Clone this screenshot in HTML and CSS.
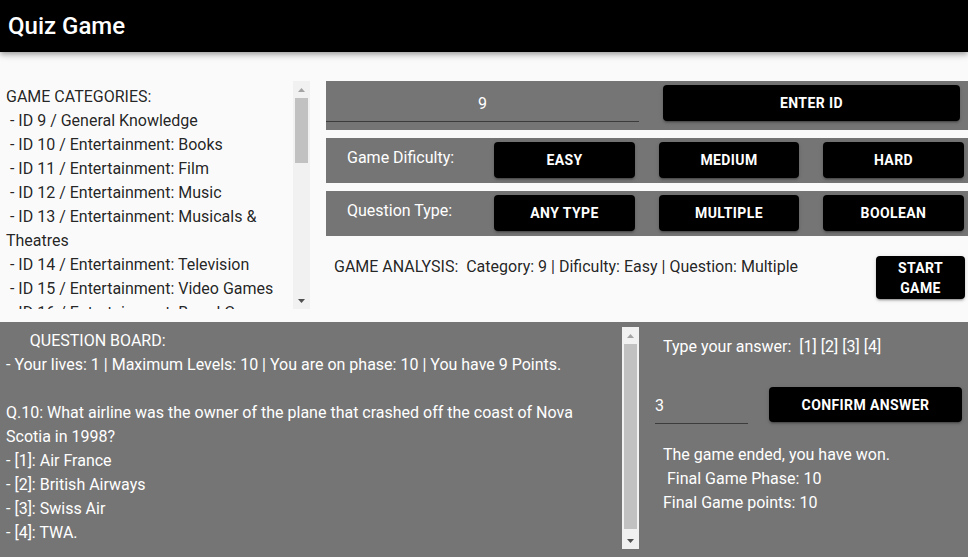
FILE: index.html
```html
<!DOCTYPE html>
<html lang="en">
<head>
<meta charset="utf-8">
<title>Quiz Game</title>
<link rel="stylesheet" href="styles.css">
</head>
<body>
<header class="appbar"><h1 class="title">Quiz Game</h1></header>
<main>
  <section class="top">
    <div class="scrollbox categories">
      <div class="scroll-content">GAME CATEGORIES:
 - ID 9 / General Knowledge
 - ID 10 / Entertainment: Books
 - ID 11 / Entertainment: Film
 - ID 12 / Entertainment: Music
 - ID 13 / Entertainment: Musicals &amp; Theatres
 - ID 14 / Entertainment: Television
 - ID 15 / Entertainment: Video Games
 - ID 16 / Entertainment: Board Games
 - ID 17 / Science &amp; Nature
 - ID 18 / Science: Computers
 - ID 19 / Science: Mathematics
 - ID 20 / Mythology
 - ID 21 / Sports
 - ID 22 / Geography
 - ID 23 / History
 - ID 24 / Politics
 - ID 25 / Art
 - ID 26 / Celebrities
 - ID 27 / Animals
 - ID 28 / Vehicles
 - ID 29 / Entertainment: Comics
 - ID 30 / Science: Gadgets
 - ID 31 / Entertainment: Japanese Anime &amp; Manga
 - ID 32 / Entertainment: Cartoon &amp; Animations</div>
      <div class="scrollbar">
        <span class="sb-btn"><svg width="7" height="4" viewBox="0 0 7 4"><path d="M0 4L3.5 0L7 4Z" fill="#a3a3a3"/></svg></span>
        <span class="sb-track"><span class="sb-thumb thumb-short"></span></span>
        <span class="sb-btn"><svg width="7" height="4" viewBox="0 0 7 4"><path d="M0 0L3.5 4L7 0Z" fill="#505050"/></svg></span>
      </div>
    </div>
    <div class="controls">
      <div class="panel id-row">
        <input class="field id-field" type="text" value="9" readonly>
        <button class="btn">Enter ID</button>
      </div>
      <div class="panel choice-row">
        <span class="label">Game Dificulty:</span>
        <button class="btn">Easy</button>
        <button class="btn">Medium</button>
        <button class="btn">Hard</button>
      </div>
      <div class="panel choice-row">
        <span class="label">Question Type:</span>
        <button class="btn">Any Type</button>
        <button class="btn">Multiple</button>
        <button class="btn">Boolean</button>
      </div>
      <div class="analysis">
        <p class="analysis-text">GAME ANALYSIS:  Category: 9 | Dificulty: Easy | Question: Multiple</p>
        <button class="btn start">Start Game</button>
      </div>
    </div>
  </section>
  <section class="board">
    <div class="scrollbox question">
      <div class="scroll-content">      QUESTION BOARD:
- Your lives: 1 | Maximum Levels: 10 | You are on phase: 10 | You have 9 Points.

Q.10: What airline was the owner of the plane that crashed off the coast of Nova Scotia in 1998?
- [1]: Air France
- [2]: British Airways
- [3]: Swiss Air
- [4]: TWA.</div>
      <div class="scrollbar">
        <span class="sb-btn"><svg width="7" height="4" viewBox="0 0 7 4"><path d="M0 4L3.5 0L7 4Z" fill="#a3a3a3"/></svg></span>
        <span class="sb-track"><span class="sb-thumb thumb-long"></span></span>
        <span class="sb-btn"><svg width="7" height="4" viewBox="0 0 7 4"><path d="M0 0L3.5 4L7 0Z" fill="#505050"/></svg></span>
      </div>
    </div>
    <div class="answer">
      <p class="prompt">Type your answer:  [1] [2] [3] [4]</p>
      <div class="answer-row">
        <input class="field answer-field" type="text" value="3" readonly>
        <button class="btn confirm">Confirm Answer</button>
      </div>
      <p class="result">The game ended, you have won.
 Final Game Phase: 10
Final Game points: 10</p>
    </div>
  </section>
</main>
</body>
</html>
```
FILE: styles.css
```css
html, body {
  margin: 0;
  padding: 0;
}
body {
  background: #fafafa;
  font-family: Roboto, "Liberation Sans", sans-serif;
  font-size: 16px;
  line-height: 24px;
  color: rgba(0, 0, 0, 0.87);
  overflow: hidden;
}
.appbar {
  height: 52px;
  background: #000;
  display: flex;
  align-items: center;
  padding-left: 8px;
  box-shadow: 0 2px 4px -1px rgba(0,0,0,.2), 0 4px 5px 0 rgba(0,0,0,.14), 0 1px 10px 0 rgba(0,0,0,.12);
  position: relative;
  z-index: 1;
}
.title {
  margin: 0;
  font-size: 24px;
  font-weight: 500;
  line-height: 28px;
  color: #fff;
}
.top {
  display: grid;
  grid-template-columns: 310px 642px;
  column-gap: 16px;
  padding-top: 29px;
  height: 270px;
  box-sizing: border-box;
}
.scrollbox {
  display: flex;
  overflow: hidden;
  box-sizing: border-box;
}
.scroll-content {
  flex: 1;
  min-width: 0;
  overflow: hidden;
  white-space: pre-wrap;
}
.scrollbar {
  width: 17px;
  flex: none;
  background: #f1f1f1;
  display: flex;
  flex-direction: column;
}
.sb-btn {
  height: 17px;
  flex: none;
  display: flex;
  align-items: center;
  justify-content: center;
}
.sb-btn svg {
  display: block;
}
.sb-track {
  flex: 1;
  padding: 0 2px;
}
.sb-thumb {
  display: block;
  background: #c1c1c1;
}
.thumb-short {
  height: 65px;
}
.thumb-long {
  height: 185px;
}
.categories {
  height: 228px;
}
.categories .scroll-content {
  padding: 4px 0 0 6px;
}
.controls {
  display: flex;
  flex-direction: column;
}
.panel {
  background: #757575;
  color: #fff;
}
.btn {
  background: #000;
  color: #fff;
  border: none;
  border-radius: 4px;
  font-family: Roboto, "Liberation Sans", sans-serif;
  font-size: 14px;
  font-weight: 700;
  text-transform: uppercase;
  letter-spacing: 0.02857em;
  padding: 0;
  height: 36px;
  box-shadow: 0 3px 1px -2px rgba(0,0,0,.2), 0 2px 2px 0 rgba(0,0,0,.14), 0 1px 5px 0 rgba(0,0,0,.12);
  cursor: pointer;
}
.field {
  background: transparent;
  border: none;
  border-bottom: 1px solid #3c3c3c;
  color: #fff;
  font-family: Roboto, "Liberation Sans", sans-serif;
  font-size: 16px;
  outline: none;
  box-sizing: border-box;
  padding: 0;
}
.id-row {
  height: 49px;
  display: grid;
  grid-template-columns: 313px 297px;
  column-gap: 24px;
  align-items: start;
}
.id-field {
  width: 313px;
  height: 41px;
  padding-top: 4px;
  text-align: center;
}
.id-row .btn {
  margin-top: 4px;
}
.choice-row {
  margin-top: 8px;
  height: 45px;
  display: grid;
  grid-template-columns: 144px 141px 140px 141px;
  column-gap: 24px;
  align-items: start;
}
.choice-row .btn {
  margin-top: 4px;
}
.label {
  padding: 8px 0 0 21px;
  white-space: nowrap;
}
.analysis {
  height: 86px;
  display: flex;
  justify-content: space-between;
  align-items: flex-start;
  padding: 0 3px 0 8px;
}
.analysis-text {
  margin: 19px 0 0;
  white-space: pre;
}
.start {
  margin-top: 20px;
  width: 89px;
  height: 43px;
  line-height: 20px;
}
.board {
  background: #757575;
  color: #fff;
  display: grid;
  grid-template-columns: 639px 1fr;
  height: 235px;
}
.question {
  margin-top: 5px;
  height: 222px;
}
.question .scroll-content {
  padding: 2px 24px 0 6px;
}
.answer {
  padding-left: 16px;
}
.prompt {
  margin: 13px 0 0;
  padding-left: 8px;
  white-space: pre;
}
.answer-row {
  margin-top: 28px;
  display: flex;
  align-items: flex-start;
  column-gap: 21px;
}
.answer-field {
  width: 93px;
  height: 36px;
  margin-top: 1px;
}
.confirm {
  width: 193px;
  height: 35px;
}
.result {
  margin: 19px 0 0;
  padding-left: 8px;
  white-space: pre;
}
```
